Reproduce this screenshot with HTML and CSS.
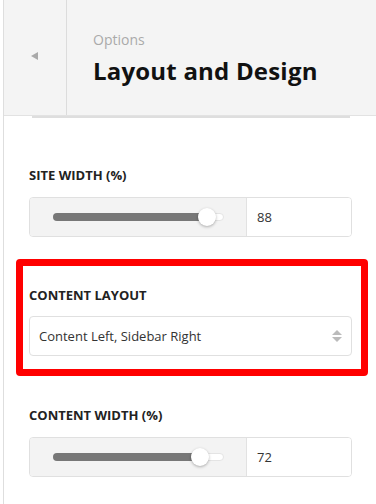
FILE: index.html
```
<!DOCTYPE html>
<html>
<head>
<meta charset="utf-8">
<link rel="stylesheet" href="styles.css">
</head>
<body>
<div class="panel">
  <header class="head">
    <div class="back"><span class="back-arrow"></span></div>
    <div class="titles">
      <div class="crumb">Options</div>
      <h1 class="title">Layout and Design</h1>
    </div>
  </header>
  <div class="rule"></div>

  <div class="field field-first">
    <div class="label">SITE WIDTH (%)</div>
    <div class="slider">
      <div class="range">
        <div class="track"><div class="fill" style="width:154px"><span class="thumb"></span></div></div>
      </div>
      <div class="value">88</div>
    </div>
  </div>

  <div class="highlight">
    <div class="label">CONTENT LAYOUT</div>
    <div class="select">
      <span class="select-text">Content Left, Sidebar Right</span>
      <span class="arrows"><span class="up"></span><span class="down"></span></span>
    </div>
  </div>

  <div class="field field-last">
    <div class="label">CONTENT WIDTH (%)</div>
    <div class="slider">
      <div class="range">
        <div class="track"><div class="fill" style="width:147px"><span class="thumb"></span></div></div>
      </div>
      <div class="value">72</div>
    </div>
  </div>
</div>
</body>
</html>
```
FILE: styles.css
```
html, body {
  margin: 0;
  padding: 0;
  background: #fff;
}
body {
  font-family: "Open Sans", "Noto Sans", sans-serif;
  color: #222;
  width: 376px;
  height: 504px;
  overflow: hidden;
}
.panel {
  margin-left: 3px;
  border-left: 1px solid #dedede;
  height: 504px;
}
.head {
  display: flex;
  height: 115px;
  background: #f4f4f4;
  border-bottom: 1px solid #e2e2e2;
}
.back {
  width: 62px;
  border-right: 1px solid #dcdcdc;
  display: flex;
  align-items: center;
  justify-content: center;
}
.back-arrow {
  width: 0;
  height: 0;
  border-top: 4px solid transparent;
  border-bottom: 4px solid transparent;
  border-right: 7px solid #a9a9a9;
  margin-left: -2px;
  margin-top: -3px;
}
.titles {
  padding-left: 26px;
  padding-top: 30px;
}
.crumb {
  font-size: 14px;
  line-height: 20px;
  color: #aaa;
}
.title {
  margin: 0;
  margin-top: 5px;
  font-size: 24px;
  line-height: 32px;
  font-weight: 700;
  color: #111;
  letter-spacing: 0.2px;
}
.rule {
  margin: 0 26px 0 28px;
  height: 2px;
  background: #dedede;
}
.field, .highlight .label, .highlight .select {
  width: 323px;
}
.field {
  margin-left: 25px;
}
.field-first {
  padding-top: 49px;
}
.field-last {
  padding-top: 31px;
}
.label {
  font-size: 13px;
  line-height: 16px;
  font-weight: 700;
  color: #222;
  margin-bottom: 14px;
}
.slider {
  display: flex;
  height: 38px;
  border: 1px solid #e0e0e0;
  border-radius: 4px;
  overflow: hidden;
}
.range {
  width: 217px;
  background: #f3f3f3;
  border-right: 1px solid #e2e2e2;
  display: flex;
  align-items: center;
  padding-left: 23px;
  box-sizing: border-box;
}
.track {
  position: relative;
  width: 171px;
  height: 8px;
  background: #fff;
  border: 1px solid #e4e4e4;
  box-sizing: border-box;
  border-radius: 4px;
}
.fill {
  position: relative;
  height: 8px;
  margin: -1px 0 0 -1px;
  background: #777;
  border-radius: 4px;
}
.thumb {
  position: absolute;
  right: -9px;
  top: -5px;
  width: 18px;
  height: 18px;
  border-radius: 50%;
  background: #fff;
  box-shadow: 0 1px 3px rgba(0,0,0,0.3);
}
.value {
  flex: 1;
  display: flex;
  align-items: center;
  padding-left: 10px;
  font-size: 13px;
  color: #333;
  background: #fff;
}
.highlight {
  margin: 22px 8px 0 12px;
  border: 7px solid #f00;
  border-radius: 4px;
  padding: 21px 0 13px 6px;
}
.highlight .label {
  margin-bottom: 13px;
}
.select {
  height: 38px;
  border: 1px solid #e0e0e0;
  border-radius: 4px;
  display: flex;
  align-items: center;
  justify-content: space-between;
  padding: 0 9px 0 9px;
  font-size: 13px;
  color: #333;
}
.highlight .select {
  box-sizing: border-box;
  height: 40px;
}
.arrows {
  display: flex;
  flex-direction: column;
  gap: 2px;
}
.up, .down {
  width: 0;
  height: 0;
  border-left: 5px solid transparent;
  border-right: 5px solid transparent;
}
.up {
  border-bottom: 5px solid #bbb;
}
.down {
  border-top: 5px solid #bbb;
}
```
